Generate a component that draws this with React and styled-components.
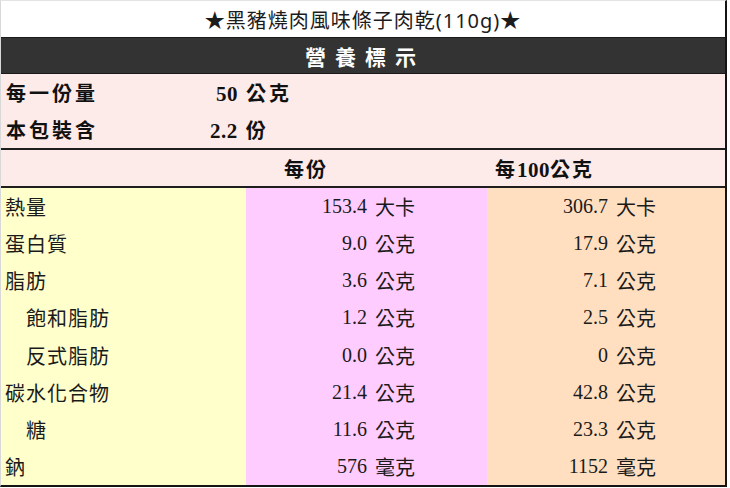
import React from "react";
import styled, { createGlobalStyle } from "styled-components";

const GlobalStyle = createGlobalStyle`
  html, body {
    margin: 0;
    padding: 0;
    background: #ffffff;
  }
  body {
    font-family: "Noto Sans CJK TC", "Noto Sans", sans-serif;
  }
`;

const cjk = `"Noto Sans CJK TC", "Noto Sans", sans-serif`;
const sans = `"Noto Sans", "Noto Sans CJK TC", sans-serif`;
const serif = `"Liberation Serif", "Noto Sans CJK TC", serif`;

const Panel = styled.div`
  width: 727px;
  height: 487px;
  box-sizing: border-box;
  border-left: 1px solid #d8d8d8;
  border-right: 2px solid #141414;
  border-bottom: 2px solid #141414;
  border-top: 1px solid #e4e4e4;
  display: flex;
  flex-direction: column;
  overflow: hidden;
`;

const Title = styled.div`
  height: 36px;
  display: flex;
  align-items: center;
  justify-content: center;
  font-family: ${sans};
  font-size: 20px;
  letter-spacing: 1px;
  color: #1c1c1c;
  background: #ffffff;
`;

const Banner = styled.div`
  height: 37px;
  box-sizing: border-box;
  border-top: 1px solid #1a1a1a;
  border-bottom: 1px solid #1a1a1a;
  background: #333333;
  color: #ffffff;
  display: flex;
  align-items: center;
  justify-content: center;
  font-family: ${cjk};
  font-weight: 700;
  font-size: 21px;
  letter-spacing: 9px;
  padding-left: 4px;
`;

const Serving = styled.div`
  background: #fdebe9;
  border-bottom: 2px solid #1e1e1e;
`;

const ServingRow = styled.div`
  height: 37px;
  display: flex;
  align-items: center;
  font-family: ${cjk};
  font-weight: 700;
  font-size: 20px;
  letter-spacing: 3px;
  color: #111;
`;

const ServingLabel = styled.div`
  width: 205px;
  padding-left: 5px;
  box-sizing: border-box;
`;

const ServingValue = styled.div`
  padding-left: ${(p) => p.$offset || 0}px;
  display: flex;
  align-items: baseline;
  gap: 8px;
`;

const Num = styled.span`
  font-family: ${serif};
  font-size: ${(p) => (p.$bold ? 21 : 20)}px;
  font-weight: ${(p) => (p.$bold ? 700 : 400)};
  letter-spacing: ${(p) => (p.$bold ? 0.5 : 0)}px;
`;

const HeadRow = styled.div`
  height: 36px;
  display: grid;
  grid-template-columns: 245px 241px 1fr;
  align-items: center;
  background: #fdebe9;
  border-bottom: 2px solid #1e1e1e;
  font-family: ${cjk};
  font-weight: 700;
  font-size: 20px;
  letter-spacing: 2px;
  color: #111;
`;

const HeadCell = styled.div`
  padding-left: ${(p) => p.$pad}px;
  display: flex;
  align-items: baseline;
`;

const Body = styled.div`
  flex: 1;
  display: grid;
  grid-template-columns: 245px 241px 1fr;
  grid-auto-rows: 1fr;
`;

const Name = styled.div`
  background: #ffffcc;
  display: flex;
  align-items: center;
  padding-left: ${(p) => (p.$sub ? 25 : 4)}px;
  font-family: ${cjk};
  font-size: 20px;
  letter-spacing: 1px;
  color: #1a1a1a;
`;

const Value = styled.div`
  background: ${(p) => p.$bg};
  display: flex;
  align-items: center;
  justify-content: flex-end;
  gap: 8px;
  padding-right: ${(p) => p.$pad}px;
  font-family: ${cjk};
  font-size: 20px;
  color: #1a1a1a;
`;

const rows = [
  { name: "熱量", a: "153.4", b: "306.7", unit: "大卡" },
  { name: "蛋白質", a: "9.0", b: "17.9", unit: "公克" },
  { name: "脂肪", a: "3.6", b: "7.1", unit: "公克" },
  { name: "飽和脂肪", a: "1.2", b: "2.5", unit: "公克", sub: true },
  { name: "反式脂肪", a: "0.0", b: "0", unit: "公克", sub: true },
  { name: "碳水化合物", a: "21.4", b: "42.8", unit: "公克" },
  { name: "糖", a: "11.6", b: "23.3", unit: "公克", sub: true },
  { name: "鈉", a: "576", b: "1152", unit: "毫克" },
];

export default function App() {
  return (
    <>
      <GlobalStyle />
      <Panel>
        <Title>★黑豬燒肉風味條子肉乾(110g)★</Title>
        <Banner>營養標示</Banner>
        <Serving>
          <ServingRow>
            <ServingLabel>每一份量</ServingLabel>
            <ServingValue $offset={10}>
              <Num $bold>50</Num>
              <span>公克</span>
            </ServingValue>
          </ServingRow>
          <ServingRow>
            <ServingLabel>本包裝含</ServingLabel>
            <ServingValue $offset={4}>
              <Num $bold>2.2</Num>
              <span>份</span>
            </ServingValue>
          </ServingRow>
        </Serving>
        <HeadRow>
          <div />
          <HeadCell $pad={38}>每份</HeadCell>
          <HeadCell $pad={8}>
            每<Num $bold>100</Num>公克
          </HeadCell>
        </HeadRow>
        <Body>
          {rows.map((r) => (
            <React.Fragment key={r.name}>
              <Name $sub={r.sub}>{r.name}</Name>
              <Value $bg="#ffccff" $pad={72}>
                <Num>{r.a}</Num>
                <span>{r.unit}</span>
              </Value>
              <Value $bg="#ffdfc0" $pad={69}>
                <Num>{r.b}</Num>
                <span>{r.unit}</span>
              </Value>
            </React.Fragment>
          ))}
        </Body>
      </Panel>
    </>
  );
}
